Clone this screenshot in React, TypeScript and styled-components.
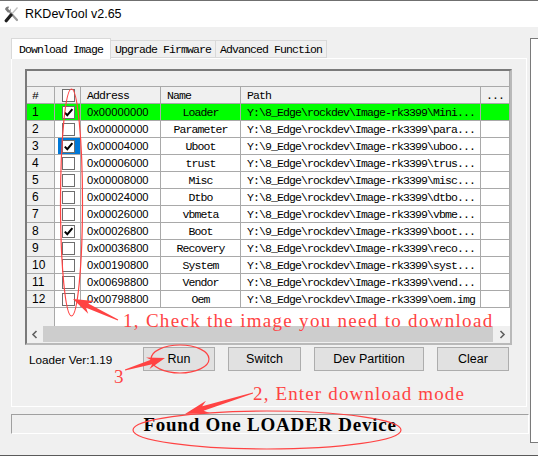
import React from "react";
import styled, { createGlobalStyle } from "styled-components";

const MONO = `"Liberation Mono", "DejaVu Sans Mono", monospace`;
const SERIF = `"Liberation Serif", "DejaVu Serif", serif`;
const SANS = `"Liberation Sans", Arial, sans-serif`;
const RED = "#ff4343";
const GRID = "#a9a9a9";

const GlobalStyle = createGlobalStyle`
  html, body {
    margin: 0;
    padding: 0;
    background: #f0f0f0;
  }
  * {
    box-sizing: border-box;
  }
`;

type Part = {
  no: number;
  checked: boolean;
  address: string;
  name: string;
  path: string;
};

const parts: Part[] = [
  { no: 1, checked: true, address: "0x00000000", name: "Loader", path: "Y:\\8_Edge\\rockdev\\Image-rk3399\\Mini..." },
  { no: 2, checked: false, address: "0x00000000", name: "Parameter", path: "Y:\\8_Edge\\rockdev\\Image-rk3399\\para..." },
  { no: 3, checked: true, address: "0x00004000", name: "Uboot", path: "Y:\\9_Edge\\rockdev\\Image-rk3399\\uboo..." },
  { no: 4, checked: false, address: "0x00006000", name: "trust", path: "Y:\\8_Edge\\rockdev\\Image-rk3399\\trus..." },
  { no: 5, checked: false, address: "0x00008000", name: "Misc", path: "Y:\\8_Edge\\rockdev\\Image-rk3399\\misc..." },
  { no: 6, checked: false, address: "0x00024000", name: "Dtbo", path: "Y:\\8_Edge\\rockdev\\Image-rk3399\\dtbo..." },
  { no: 7, checked: false, address: "0x00026000", name: "vbmeta", path: "Y:\\8_Edge\\rockdev\\Image-rk3399\\vbme..." },
  { no: 8, checked: true, address: "0x00026800", name: "Boot", path: "Y:\\9_Edge\\rockdev\\Image-rk3399\\boot..." },
  { no: 9, checked: false, address: "0x00036800", name: "Recovery", path: "Y:\\8_Edge\\rockdev\\Image-rk3399\\reco..." },
  { no: 10, checked: false, address: "0x00190800", name: "System", path: "Y:\\8_Edge\\rockdev\\Image-rk3399\\syst..." },
  { no: 11, checked: false, address: "0x00698800", name: "Vendor", path: "Y:\\8_Edge\\rockdev\\Image-rk3399\\vend..." },
  { no: 12, checked: false, address: "0x00798800", name: "Oem", path: "Y:\\8_Edge\\rockdev\\Image-rk3399\\oem.img" },
];

// arrow shaped like the screenshot tool ones: thin tail, wide barbed head
function arrow(x1: number, y1: number, x2: number, y2: number, head = 18, headW = 6.5) {
  const len = Math.hypot(x2 - x1, y2 - y1);
  const ux = (x2 - x1) / len;
  const uy = (y2 - y1) / len;
  const px = -uy;
  const py = ux;
  const bx = x2 - ux * head;
  const by = y2 - uy * head;
  const nx = x2 - ux * head * 0.78;
  const ny = y2 - uy * head * 0.78;
  const pts = [
    [x1 + px * 0.4, y1 + py * 0.4],
    [nx + px * 2.4, ny + py * 2.4],
    [bx + px * headW, by + py * headW],
    [x2, y2],
    [bx - px * headW, by - py * headW],
    [nx - px * 2.4, ny - py * 2.4],
    [x1 - px * 0.4, y1 - py * 0.4],
  ];
  return pts.map((p) => `${p[0].toFixed(1)},${p[1].toFixed(1)}`).join(" ");
}

function ToolIcon() {
  return (
    <svg width="15" height="17" viewBox="0 0 15 17">
      {/* wrench */}
      <path d="M3.5 3.5 L13 14" stroke="#9a9a9a" strokeWidth="2.2" strokeLinecap="round" />
      <path d="M1 3.2 A3 3 0 0 1 5.2 0.8 L3.6 3.4 L5.6 4.8 L6.6 2.6 A3 3 0 0 1 3.8 6.6 Z" fill="#7c7c7c" />
      {/* screwdriver */}
      <path d="M13.5 1.5 L6.5 9.5" stroke="#c2c2c2" strokeWidth="1.3" />
      <path d="M7 9 L2.2 14.8" stroke="#1e1e1e" strokeWidth="3.2" strokeLinecap="round" />
    </svg>
  );
}

function Check({ checked }: { checked: boolean }) {
  return (
    <Box>
      {checked && (
        <svg width="11" height="11" viewBox="0 0 11 11">
          <path d="M1.8 5.6 L4.3 8.2 L9.4 2.2" stroke="#000" strokeWidth="2" fill="none" />
        </svg>
      )}
    </Box>
  );
}

function Chevron({ dir }: { dir: "left" | "right" }) {
  return (
    <svg width="8" height="9" viewBox="0 0 8 9">
      <path
        d={dir === "left" ? "M5.5 1 L2 4.5 L5.5 8" : "M2.5 1 L6 4.5 L2.5 8"}
        stroke="#606060"
        strokeWidth="1.6"
        fill="none"
      />
    </svg>
  );
}

export default function App() {
  return (
    <>
      <GlobalStyle />
      <Window>
        <TitleBar>
          <ToolIcon />
          <TitleText>RKDevTool v2.65</TitleText>
        </TitleBar>
        <Body>
          <LeftColumn>
            <Tabs>
              <Tab $active>Download Image</Tab>
              <Tab>Upgrade Firmware</Tab>
              <Tab>Advanced Function</Tab>
            </Tabs>
            <Panel>
              <List>
                <Band />
                <GridRow $header>
                  <NumCell $header>#</NumCell>
                  <CheckCell>
                    <Check checked={false} />
                  </CheckCell>
                  <HeadText>Address</HeadText>
                  <HeadText>Name</HeadText>
                  <HeadText>Path</HeadText>
                  <HeadText $center>...</HeadText>
                </GridRow>
                {parts.map((p) => (
                  <GridRow key={p.no} $green={p.no === 1}>
                    <NumCell $green={p.no === 1}>{p.no}</NumCell>
                    <CheckCell $selected={p.no === 3}>
                      <Check checked={p.checked} />
                    </CheckCell>
                    <AddrCell>{p.address}</AddrCell>
                    <NameCell>{p.name}</NameCell>
                    <PathCell>{p.path}</PathCell>
                    <Cell />
                  </GridRow>
                ))}
                <Filler>
                  <FillerNum />
                </Filler>
                <ScrollBar>
                  <ScrollButton>
                    <Chevron dir="left" />
                  </ScrollButton>
                  <Thumb />
                  <ScrollButton>
                    <Chevron dir="right" />
                  </ScrollButton>
                </ScrollBar>
              </List>
              <Actions>
                <LoaderVer>Loader Ver:1.19</LoaderVer>
                <Button $w={72}>Run</Button>
                <Button $w={73}>Switch</Button>
                <Button $w={110}>Dev Partition</Button>
                <Button $w={72}>Clear</Button>
              </Actions>
            </Panel>
            <StatusBar>
              <StatusText>Found One LOADER Device</StatusText>
            </StatusBar>
          </LeftColumn>
          <SideFrame />
        </Body>

        <Overlay>
          <svg width="538" height="456" viewBox="0 0 538 456">
            <g fill="none" stroke={RED} strokeWidth="1.2">
              <ellipse cx="71.5" cy="201.5" rx="11" ry="113.5" />
              <ellipse cx="180" cy="358" rx="29" ry="14" />
              <ellipse cx="267" cy="429" rx="134" ry="19" />
            </g>
            <g fill={RED}>
              <polygon points={arrow(118, 319, 73, 298, 20, 7)} />
              <polygon points={arrow(125, 369, 165, 357, 18, 6)} />
              <polygon points={arrow(253, 392, 185, 413, 24, 6.5)} />
            </g>
          </svg>
          <Note $spacing={1.3} style={{ left: 123, top: 309 }}>
            1, Check the image you need to download
          </Note>
          <Note style={{ left: 114, top: 365 }}>3</Note>
          <Note style={{ left: 253, top: 382 }}>2, Enter download mode</Note>
        </Overlay>
      </Window>
    </>
  );
}

const Window = styled.div`
  position: relative;
  width: 538px;
  height: 456px;
  background: #f0f0f0;
  border-top: 1px solid #6f6f6f;
  border-bottom: 1px solid #5a5a5a;
  overflow: hidden;
`;

const TitleBar = styled.div`
  height: 26px;
  background: #ffffff;
  display: flex;
  align-items: center;
  gap: 6px;
  padding-left: 4px;
`;

const TitleText = styled.span`
  font-family: ${SANS};
  font-size: 12.5px;
  color: #000;
`;

const Body = styled.div`
  display: flex;
  height: 428px;
`;

const LeftColumn = styled.div`
  margin-left: 11px;
  width: 518px;
  padding-top: 11px;
  display: flex;
  flex-direction: column;
`;

const Tabs = styled.div`
  display: flex;
  align-items: flex-end;
  height: 20px;
  position: relative;
  z-index: 1;
`;

const Tab = styled.div<{ $active?: boolean }>`
  height: ${(p) => (p.$active ? "21px" : "18px")};
  margin-bottom: ${(p) => (p.$active ? "-1px" : "0")};
  padding: ${(p) => (p.$active ? "0 7px" : "0 4px")};
  background: ${(p) => (p.$active ? "#ffffff" : "#f0f0f0")};
  border: 1px solid #d9d9d9;
  border-bottom: ${(p) => (p.$active ? "none" : "1px solid #d9d9d9")};
  border-left: ${(p) => (p.$active ? "1px solid #d9d9d9" : "none")};
  display: flex;
  align-items: center;
  font-family: ${MONO};
  font-size: 11.5px;
  letter-spacing: -0.9px;
  color: #000;
  white-space: nowrap;
`;

const Panel = styled.div`
  width: 516px;
  height: 349px;
  border: 1px solid #ffffff;
  background: #f0f0f0;
  padding: 10px 0 0 13px;
`;

const List = styled.div`
  width: 487px;
  height: 276px;
  border: 2px solid;
  border-color: #7a7a7a #b9b9b9 #b9b9b9 #7a7a7a;
  background: #ffffff;
  display: flex;
  flex-direction: column;
  overflow: hidden;
`;

const Band = styled.div`
  height: 16px;
  flex: none;
  background: #f0f0f0;
  border-bottom: 1px solid ${GRID};
  border-right: 1px solid ${GRID};
`;

const GridRow = styled.div<{ $green?: boolean; $header?: boolean }>`
  display: grid;
  grid-template-columns: 28px 26px 80px 80px 240px 29px;
  height: 17px;
  flex: none;
  background: ${(p) => (p.$green ? "#00ff00" : p.$header ? "#f0f0f0" : "#ffffff")};
`;

const Cell = styled.div`
  border-right: 1px solid ${GRID};
  border-bottom: 1px solid ${GRID};
  display: flex;
  align-items: center;
  overflow: hidden;
  white-space: nowrap;
  color: #000;
`;

const NumCell = styled(Cell)<{ $header?: boolean; $green?: boolean }>`
  padding-left: 5px;
  background: ${(p) => (p.$header || p.$green ? "transparent" : "#f0f0f0")};
  font-family: ${(p) => (p.$header ? MONO : SANS)};
  font-size: ${(p) => (p.$header ? "11.5px" : "12px")};
  letter-spacing: ${(p) => (p.$header ? "-0.9px" : "0")};
`;

const CheckCell = styled(Cell)<{ $selected?: boolean }>`
  justify-content: center;
  padding-left: 1px;
  background: ${(p) =>
    p.$selected ? "linear-gradient(to right, transparent 3px, #0078d7 3px)" : "transparent"};
`;

const Box = styled.div`
  width: 13px;
  height: 13px;
  border: 1px solid #6e6e6e;
  background: #ffffff;
  display: flex;
  align-items: center;
  justify-content: center;
`;

const HeadText = styled(Cell)<{ $center?: boolean }>`
  justify-content: ${(p) => (p.$center ? "center" : "flex-start")};
  padding-left: ${(p) => (p.$center ? "0" : "6px")};
  font-family: ${MONO};
  font-size: 11.5px;
  letter-spacing: -0.9px;
`;

const AddrCell = styled(Cell)`
  padding-left: 6px;
  font-family: ${SANS};
  font-size: 11.2px;
`;

const NameCell = styled(Cell)`
  justify-content: center;
  font-family: ${MONO};
  font-size: 11.5px;
  letter-spacing: -0.9px;
`;

const PathCell = styled(Cell)`
  padding-left: 6px;
  font-family: ${MONO};
  font-size: 11.5px;
  letter-spacing: -0.9px;
`;

const Filler = styled.div`
  flex: 1;
  display: flex;
`;

const FillerNum = styled.div`
  width: 28px;
  background: #f0f0f0;
  border-right: 1px solid ${GRID};
`;

const ScrollBar = styled.div`
  height: 17px;
  flex: none;
  display: flex;
  background: #f0f0f0;
`;

const ScrollButton = styled.div`
  width: 16px;
  display: flex;
  align-items: center;
  justify-content: center;
`;

const Thumb = styled.div`
  flex: 1;
  margin: 0 1px 1px 0;
  background: #cdcdcd;
`;

const Actions = styled.div`
  display: flex;
  align-items: center;
  gap: 13px;
  margin-top: 2px;
  padding-left: 4px;
`;

const LoaderVer = styled.span`
  width: 101px;
  font-family: ${SANS};
  font-size: 11.7px;
  color: #000;
  white-space: nowrap;
`;

const Button = styled.button<{ $w: number }>`
  width: ${(p) => p.$w}px;
  height: 24px;
  padding: 0;
  border: 1px solid #adadad;
  background: #e1e1e1;
  font-family: ${SANS};
  font-size: 12.5px;
  color: #000;
`;

const StatusBar = styled.div`
  margin-top: 7px;
  width: 518px;
  height: 20px;
  border-style: solid;
  border-width: 1px;
  border-color: #a0a0a0 #ffffff #ffffff #a0a0a0;
  padding-top: 1px;
  text-align: center;
`;

const StatusText = styled.span`
  display: inline-block;
  font-family: ${SERIF};
  font-weight: 700;
  font-size: 19px;
  letter-spacing: 0.75px;
  line-height: 18px;
  color: #000;
  white-space: nowrap;
`;

const SideFrame = styled.div`
  margin-left: 1px;
  margin-top: 11px;
  width: 8px;
  height: 405px;
  background: #ffffff;
  border-left: 1px solid #7a7a7a;
  border-top: 1px solid #7a7a7a;
  border-bottom: 1px solid #7a7a7a;
`;

const Overlay = styled.div`
  position: absolute;
  left: 0;
  top: 0;
  width: 538px;
  height: 456px;
  pointer-events: none;

  svg {
    position: absolute;
    left: 0;
    top: 0;
  }
`;

const Note = styled.span<{ $spacing?: number }>`
  position: absolute;
  font-family: ${SERIF};
  font-size: 19px;
  letter-spacing: ${(p) => p.$spacing ?? 1.15}px;
  line-height: 1.107;
  color: ${RED};
  white-space: nowrap;
`;
